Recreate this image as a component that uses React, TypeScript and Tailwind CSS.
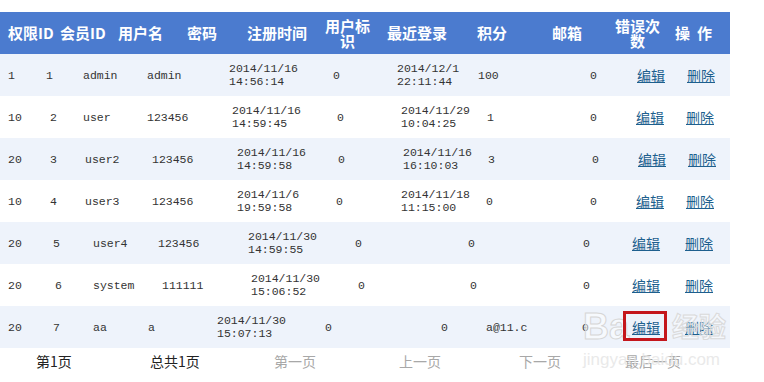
type Row = {
  cols: string;
  bg: string;
  cells: string[];
};

const rows: Row[] = [
  {
    cols: 'grid-cols-[38px_37px_64px_82px_104px_64px_81px_112px_47px_50px_auto]',
    bg: 'bg-[#eef3fb]',
    cells: ['1', '1', 'admin', 'admin', '2014/11/16\n14:56:14', '0', '2014/12/1\n22:11:44', '100', '0'],
  },
  {
    cols: 'grid-cols-[42px_33px_64px_85px_105px_64px_86px_103px_46px_50px_auto]',
    bg: 'bg-white',
    cells: ['10', '2', 'user', '123456', '2014/11/16\n14:59:45', '0', '2014/11/29\n10:04:25', '1', '0'],
  },
  {
    cols: 'grid-cols-[42px_35px_67px_85px_101px_65px_85px_104px_46px_50px_auto]',
    bg: 'bg-[#eef3fb]',
    cells: ['20', '3', 'user2', '123456', '2014/11/16\n14:59:58', '0', '2014/11/16\n16:10:03', '3', '0'],
  },
  {
    cols: 'grid-cols-[42px_35px_67px_85px_99px_65px_85px_104px_46px_50px_auto]',
    bg: 'bg-white',
    cells: ['10', '4', 'user3', '123456', '2014/11/6\n19:59:58', '0', '2014/11/18\n11:15:00', '0', '0'],
  },
  {
    cols: 'grid-cols-[45px_40px_65px_90px_107px_113px_115px_49px_53px_auto]',
    bg: 'bg-[#eef3fb]',
    cells: ['20', '5', 'user4', '123456', '2014/11/30\n14:59:55', '0', '0', '0'],
  },
  {
    cols: 'grid-cols-[47px_38px_69px_89px_107px_112px_113px_49px_53px_auto]',
    bg: 'bg-white',
    cells: ['20', '6', 'system', '111111', '2014/11/30\n15:06:52', '0', '0', '0'],
  },
  {
    cols: 'grid-cols-[45px_40px_55px_69px_108px_116px_45px_96px_50px_53px_auto]',
    bg: 'bg-[#eef3fb]',
    cells: ['20', '7', 'aa', 'a', '2014/11/30\n15:07:13', '0', '0', 'a@11.c', '0'],
  },
];

const cjk = "font-['Noto_Sans_CJK_SC',sans-serif]";

// faint site watermark sitting over the last row
function Watermark() {
  return (
    <div className="pointer-events-none absolute left-[580px] top-[308px] w-[160px] h-[64px] whitespace-nowrap">
      <div className="absolute left-[3px] top-[1px] text-[36px] leading-[36px] font-bold font-['Liberation_Sans',sans-serif] text-white/50 [-webkit-text-stroke:1px_#d6d6d6]">
        Ba
      </div>
      <div className="absolute left-[43px] top-[3px] w-[44px] h-[30px] border-[3px] border-[#c4161c]" />
      <div className={`absolute left-[92px] top-[4px] text-[27px] leading-[28px] font-bold text-white/40 [-webkit-text-stroke:1px_#dadada] ${cjk}`}>
        经验
      </div>
      <div className="absolute left-[3px] top-[43px] text-[17px] leading-[18px] font-['Liberation_Sans',sans-serif] text-[#e4e4e4]/80">
        jingyan.baidu.com
      </div>
    </div>
  );
}

export default function App() {
  return (
    <div className="relative w-[764px] h-[382px] bg-white pt-[12px] overflow-hidden">
      <div className="w-[730px]">
        {/* header */}
        <div
          className={`grid grid-cols-[52px_58px_69px_60px_78px_62px_90px_75px_63px_60px_auto] items-center h-[42px] pl-[8px] bg-[#4b7bcf] text-white text-[15px] font-bold ${cjk}`}
        >
          <span>权限ID</span>
          <span>会员ID</span>
          <span>用户名</span>
          <span>密码</span>
          <span>注册时间</span>
          <span className="w-[45px] text-center leading-[15px]">用户标识</span>
          <span>最近登录</span>
          <span>积分</span>
          <span>邮箱</span>
          <span className="w-[45px] text-center leading-[15px]">错误次数</span>
          <span className="flex gap-[7px]">
            <span>操</span>
            <span>作</span>
          </span>
        </div>

        {rows.map((row, i) => (
          <div
            key={i}
            className={`grid ${row.cols} items-center h-[42px] pl-[8px] ${row.bg} text-[#333] text-[11.5px] leading-[13px] font-['Liberation_Mono','Noto_Sans_CJK_SC',monospace]`}
          >
            {row.cells.map((c, j) => (
              <span key={j} className="whitespace-pre-line">
                {c}
              </span>
            ))}
            <a href="#" className={`text-[14px] text-[#1d5f8e] underline ${cjk}`}>
              编辑
            </a>
            <a href="#" className={`text-[14px] text-[#1d5f8e] underline ${cjk}`}>
              删除
            </a>
          </div>
        ))}

        {/* pager */}
        <div
          className={`grid grid-cols-[114px_124px_125px_120px_106px_auto] items-center h-[26px] pl-[36px] text-[14px] ${cjk}`}
        >
          <span className="text-[#222]">第1页</span>
          <span className="text-[#222]">总共1页</span>
          <span className="text-[#a8a8a8]">第一页</span>
          <span className="text-[#a8a8a8]">上一页</span>
          <span className="text-[#a8a8a8]">下一页</span>
          <span className="text-[#a8a8a8]">最后一页</span>
        </div>
      </div>
      <Watermark />
    </div>
  );
}
